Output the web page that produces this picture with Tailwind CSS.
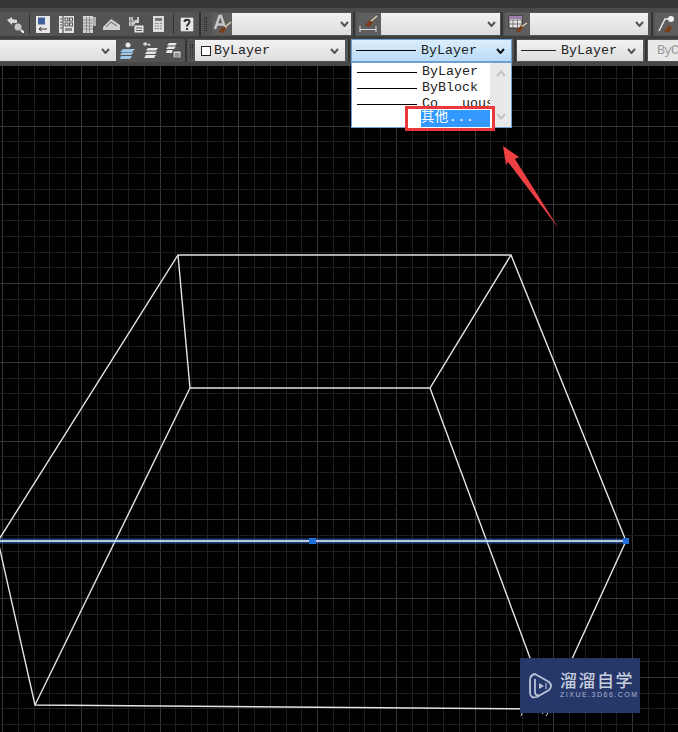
<!DOCTYPE html>
<html lang="en">
  <head>
    <meta charset="UTF-8" />
    <title>CAD toolbar</title>
    <script src="https://cdn.jsdelivr.net/npm/@tailwindcss/browser@4"></script>
  </head>
  <body class="bg-black overflow-hidden font-['Liberation_Mono','Noto_Sans_CJK_SC',monospace] text-[13.33px] text-[#222]">
    <div class="relative w-[678px] h-[732px] flex flex-col overflow-hidden">
      <div class="h-[8px] shrink-0 bg-[#363636]"></div>
      <div class="h-[4px] shrink-0 bg-[#4a4a4a]"></div>

      <!-- Toolbar row 1 -->
      <div class="h-[24px] shrink-0 bg-[#535353] flex items-center overflow-hidden">
        <svg class="ml-[7px] w-[17px] h-[17px] shrink-0" viewBox="0 0 17 17">
          <path d="M0 4 L5 1 L5 3 L10 4 L10 7 L5 7 L5 9 Z" fill="#d8d8d8" />
          <circle cx="11" cy="11" r="3.5" fill="#c8c8c8" />
          <path d="M14 14 L17 17" stroke="#fff" stroke-width="2" />
        </svg>
        <div class="ml-[5px] w-px h-[20px] shrink-0 bg-[#333]"></div>
        <svg class="ml-[6px] w-[14px] h-[17px] shrink-0" viewBox="0 0 14 17">
          <rect width="14" height="17" fill="#e8e8e8" />
          <rect x="2" y="1.5" width="7" height="7" fill="#3f5f9f" />
          <path d="M3 13 H11 M3 13 L5.500 11 M3 13 L5.500 15" stroke="#333" fill="none" />
        </svg>
        <svg class="ml-[9px] w-[15px] h-[17px] shrink-0" viewBox="0 0 15 17">
          <rect width="15" height="17" fill="#e4e4e4" />
          <path d="M4 0 V17" stroke="#333" />
          <path d="M1 3 H3 M1 6 H3 M1 9 H3 M1 12 H3" stroke="#555" />
          <rect x="6" y="2" width="3" height="3" fill="none" stroke="#555" />
          <rect x="10.500" y="2" width="3" height="3" fill="none" stroke="#555" />
          <rect x="6" y="7" width="3" height="3" fill="none" stroke="#555" />
          <rect x="10.500" y="7" width="3" height="3" fill="none" stroke="#555" />
          <rect x="6" y="12" width="7" height="3" fill="#888" />
        </svg>
        <svg class="ml-[9px] w-[13px] h-[17px] shrink-0" viewBox="0 0 13 17">
          <rect width="10" height="17" fill="#d4d4d4" />
          <rect x="10" y="1" width="3" height="9" fill="#b0b0b0" />
          <path d="M3.500 1 V17 M6.500 1 V17 M0 4 H10 M0 7 H10 M0 10 H10 M0 13 H10" stroke="#8a8a8a" />
        </svg>
        <svg class="ml-[7px] w-[17px] h-[15px] shrink-0" viewBox="0 0 17 15">
          <path d="M0 10 L8 2 L17 8 L17 13 L0 13 Z" fill="#d0d0d0" />
          <path d="M3 10 L8 5 L14 9 M8 0 L15 6" stroke="#666" fill="none" />
        </svg>
        <svg class="ml-[8px] w-[16px] h-[17px] shrink-0" viewBox="0 0 16 17">
          <path d="M1 1 H5 V4 H9 V1 H11 V7 H7 V10 H1 Z" fill="#cfcfcf" />
          <path d="M3 1 V10 M1 5 H7" stroke="#777" />
          <rect x="6" y="9" width="10" height="8" fill="#e8e8e8" stroke="#555" />
          <path d="M8 12 H14 M8 14.500 H14" stroke="#555" />
        </svg>
        <svg class="ml-[9px] w-[11px] h-[16px] shrink-0" viewBox="0 0 11 16">
          <rect width="11" height="16" fill="#dcdcdc" />
          <rect x="2" y="2" width="7" height="3" fill="#777" />
          <path d="M2 7.500 H9 M2 10 H9 M2 12.500 H9" stroke="#777" stroke-dasharray="1.500 1" />
        </svg>
        <div class="ml-[9px] w-px h-[20px] shrink-0 bg-[#333]"></div>
        <svg class="ml-[6px] w-[14px] h-[15px] shrink-0" viewBox="0 0 14 15">
          <rect width="14" height="15" fill="#e6e6e6" stroke="#222" />
          <path d="M4.500 5 C4.500 2 9.500 2 9.500 5 C9.500 7 7 7 7 9.500 M7 11 V13" stroke="#333" stroke-width="2" fill="none" />
        </svg>
        <div class="ml-[5px] w-[2px] h-[24px] shrink-0 bg-[#2f2f2f]"></div>
        <div class="ml-[3px] w-[3px] h-[14px] shrink-0 border-x border-dotted border-[#222]"></div>
        <div class="ml-[5px] w-[20px] h-[22px] bg-[#5e5e5e] flex items-center justify-center shrink-0">
          <svg class="w-[19px] h-[20px]" viewBox="0 0 19 20">
            <path d="M2 15 L6.500 2 H8 L12.500 15 M4 10.500 H10.500" stroke="#c8c8c8" stroke-width="2.400" fill="none" />
            <path d="M18 8 L11 14" stroke="#e0d0b0" stroke-width="1.500" />
            <path d="M5 18 L11 12 L13.500 15 L10 19 Z" fill="#7a3d1c" />
          </svg>
        </div>
        <div class="w-[119px] h-[22px] shrink-0 bg-linear-to-b from-[#f2f2f2] to-[#dddddd] flex items-center justify-end pr-[2px]">
          <svg class="w-[9px] h-[6px]" viewBox="0 0 9 6"><path d="M1 1 L4.500 5 L8 1" fill="none" stroke="#555" stroke-width="2" /></svg>
        </div>
        <div class="ml-[2px] w-[2px] h-[24px] shrink-0 bg-[#333]"></div>
        <div class="ml-[2px] w-[24px] h-[22px] bg-[#5e5e5e] flex items-center justify-center shrink-0">
          <svg class="w-[20px] h-[18px]" viewBox="0 0 20 18">
            <path d="M1 11 V17 M1 14.500 H17 M17 11 V17" stroke="#d8d8d8" fill="none" />
            <path d="M18 1 L11 7" stroke="#e0d0b0" stroke-width="1.500" />
            <path d="M6 10 L11 5 L14 8 L10 12 Z" fill="#7a3d1c" />
          </svg>
        </div>
        <div class="w-[119px] h-[22px] shrink-0 bg-linear-to-b from-[#f2f2f2] to-[#dddddd] flex items-center justify-end pr-[4px]">
          <svg class="w-[9px] h-[6px]" viewBox="0 0 9 6"><path d="M1 1 L4.500 5 L8 1" fill="none" stroke="#555" stroke-width="2" /></svg>
        </div>
        <div class="ml-[1px] w-[2px] h-[24px] shrink-0 bg-[#333]"></div>
        <div class="ml-[2px] w-[25px] h-[22px] bg-[#5e5e5e] flex items-center justify-center shrink-0">
          <svg class="w-[20px] h-[18px]" viewBox="0 0 20 18">
            <rect x="1" y="1" width="13" height="12" fill="#e8e8e8" stroke="#333" />
            <path d="M1 5 H14 M5 5 V13 M9.500 5 V13 M1 9 H14" stroke="#777" fill="none" />
            <rect x="1" y="1" width="13" height="3" fill="#a080b0" />
            <path d="M19 8 L13 12" stroke="#e0d0b0" stroke-width="1.500" />
            <path d="M8 17 L13 10 L15 13 L12 17 Z" fill="#7a3d1c" />
          </svg>
        </div>
        <div class="w-[118px] h-[22px] shrink-0 bg-linear-to-b from-[#f2f2f2] to-[#dddddd] flex items-center justify-end pr-[4px]">
          <svg class="w-[9px] h-[6px]" viewBox="0 0 9 6"><path d="M1 1 L4.500 5 L8 1" fill="none" stroke="#555" stroke-width="2" /></svg>
        </div>
        <div class="ml-[3px] w-[2px] h-[24px] shrink-0 bg-[#333]"></div>
        <div class="ml-[2px] w-[23px] h-[22px] bg-[#5e5e5e] flex items-center justify-center shrink-0">
          <svg class="w-[20px] h-[20px]" viewBox="0 0 20 20">
            <path d="M2 17 L8 5 H13" stroke="#e8e8e8" stroke-width="1.500" fill="none" />
            <circle cx="14" cy="5" r="3" fill="#f0f0f0" />
            <path d="M7 17 L12 11 L15 14 L12 19 Z" fill="#7a3d1c" />
          </svg>
        </div>
      </div>

      <div class="h-[3px] shrink-0 bg-[#3e3e3e]"></div>

      <!-- Toolbar row 2 -->
      <div class="h-[23px] shrink-0 bg-[#535353] flex items-center overflow-hidden">
        <div class="w-[116px] h-[21px] shrink-0 bg-linear-to-b from-[#f2f2f2] to-[#dddddd] flex items-center justify-end pr-[6px]">
          <svg class="w-[9px] h-[6px]" viewBox="0 0 9 6"><path d="M1 1 L4.500 5 L8 1" fill="none" stroke="#555" stroke-width="2" /></svg>
        </div>
        <svg class="ml-[4px] w-[15px] h-[17px] shrink-0" viewBox="0 0 15 17">
          <path d="M3 7 H15 L12 10 H0 Z M2 10.500 H14 L11 13 H0 Z M1 14 H12 L10 17 H0 Z" fill="#9fc8e8" />
          <circle cx="8" cy="3" r="2.500" fill="#e8e8e8" />
        </svg>
        <svg class="ml-[8px] w-[15px] h-[17px] shrink-0" viewBox="0 0 15 17">
          <path d="M0 2 L3 0 V4 Z M3 2 H7 V4" fill="#ddd" stroke="#ddd" stroke-width="0.500" />
          <path d="M5 6 H15 L13 8.500 H3 Z M4 9.500 H14 L12 12 H2 Z M3 13 H13 L11 16 H1 Z" fill="#e8e8e8" />
        </svg>
        <svg class="ml-[8px] w-[15px] h-[17px] shrink-0" viewBox="0 0 15 17">
          <path d="M3 1 H11 L9 3.500 H1 Z M2 4.500 H10 L8 7 H0 Z M1 8 H7 L6 11 H0 Z" fill="#e8e8e8" />
          <rect x="7" y="9" width="8" height="7" fill="#ddd" stroke="#444" />
          <path d="M8.500 12 H13.500 M8.500 14 H13.500" stroke="#444" />
        </svg>
        <div class="ml-[4px] w-[2px] h-[23px] shrink-0 bg-[#333]"></div>
        <div class="ml-[3px] w-[3px] h-[14px] shrink-0 border-x border-dotted border-[#222]"></div>
        <div class="ml-[2px] w-[150px] h-[21px] shrink-0 bg-linear-to-b from-[#f2f2f2] to-[#dddddd] flex items-center pl-[6px] pr-[6px]">
          <span class="w-[10px] h-[10px] border border-[#222] bg-white shrink-0"></span>
          <span class="ml-[3px] flex-1">ByLayer</span>
          <svg class="w-[9px] h-[6px]" viewBox="0 0 9 6"><path d="M1 1 L4.500 5 L8 1" fill="none" stroke="#555" stroke-width="2" /></svg>
        </div>
        <div class="ml-[3px] w-[2px] h-[23px] shrink-0 bg-[#333]"></div>
        <div class="w-[161px] h-[23px] ml-[1px] shrink-0 bg-linear-to-b from-[#dcEefc] to-[#b9dbf6] border border-[#6d9fd2] flex items-center pl-[4px] pr-[6px]">
          <span class="w-[60px] h-px bg-black shrink-0"></span>
          <span class="ml-[5px] flex-1">ByLayer</span>
          <svg class="w-[9px] h-[6px]" viewBox="0 0 9 6"><path d="M1 1 L4.500 5 L8 1" fill="none" stroke="#111" stroke-width="2" /></svg>
        </div>
        <div class="ml-[2px] w-[2px] h-[23px] shrink-0 bg-[#333]"></div>
        <div class="ml-[1px] w-[126px] h-[21px] shrink-0 bg-linear-to-b from-[#f2f2f2] to-[#dddddd] flex items-center pl-[4px] pr-[7px]">
          <span class="w-[35px] h-px bg-[#222] shrink-0"></span>
          <span class="ml-[5px] flex-1">ByLayer</span>
          <svg class="w-[9px] h-[6px]" viewBox="0 0 9 6"><path d="M1 1 L4.500 5 L8 1" fill="none" stroke="#555" stroke-width="2" /></svg>
        </div>
        <div class="ml-[2px] w-[2px] h-[23px] shrink-0 bg-[#333]"></div>
        <div class="ml-[1px] w-[30px] h-[21px] shrink-0 bg-[#e8e8e8] text-[#999] pl-[9px] flex items-center tracking-[-1px]">ByC</div>
      </div>

      <div class="h-[4px] shrink-0 bg-[#474747]"></div>

      <!-- Drawing area -->
      <div class="relative flex-1 bg-black">
        <svg id="canvas" class="absolute inset-0 w-[678px] h-[666px]" viewBox="0 66 678 666">
          <g id="grid"></g>
          <g fill="none" stroke="#e4e4e4" stroke-width="1.400">
            <path d="M178 255 H511 L626 541 L549 709 L35 705 L-2 541 Z" />
            <path d="M178 255 L190 388 H430 L511 255" />
            <path d="M190 388 L35 705" />
            <path d="M430 388 L549 709" />
          </g>
          <path d="M0 541 H626" stroke="#3a78d8" stroke-width="5" opacity="0.550" />
          <path d="M0 541 H626" stroke="#f0f4ff" stroke-width="1.300" />
          <rect x="309" y="538" width="7" height="6" fill="#1f6fd8" />
          <rect x="623" y="538" width="6" height="6" fill="#1f6fd8" />
          <path d="M503 146 L519 157 L515 159 L559 229 L508 162 L506 165 Z" fill="#ee3f42" />
          <path d="M521 711 L523 711 L521 716 M541 711 L543 714 M546 711 L549 711 L546 716" stroke="#d8d8d8" fill="none" />
        </svg>
      </div>

      <!-- Open dropdown -->
      <div class="absolute left-[351px] top-[62px] w-[161px] h-[66px] bg-white border border-[#6d9fd2] flex overflow-hidden">
        <div class="flex-1 min-w-0 overflow-hidden flex flex-col pt-[1px]">
          <div class="h-[16px] flex items-center pl-[5px]">
            <span class="w-[60px] h-px bg-black shrink-0"></span>
            <span class="ml-[5px]">ByLayer</span>
          </div>
          <div class="h-[16px] flex items-center pl-[5px]">
            <span class="w-[60px] h-px bg-black shrink-0"></span>
            <span class="ml-[5px]">ByBlock</span>
          </div>
          <div class="h-[16px] flex items-center pl-[5px]">
            <span class="w-[60px] h-px bg-black shrink-0"></span>
            <span class="ml-[5px]">Co</span>
            <span class="ml-[24px] whitespace-nowrap">uous</span>
          </div>
        </div>
        <div class="w-[21px] shrink-0 bg-[#e9e9e9] flex flex-col justify-between items-center py-[7px]">
          <svg class="w-[10px] h-[7px]" viewBox="0 0 10 7"><path d="M1 6 L5 1.500 L9 6" fill="none" stroke="#c4c4c4" stroke-width="2" /></svg>
          <svg class="w-[10px] h-[7px]" viewBox="0 0 10 7"><path d="M1 1 L5 5.500 L9 1" fill="none" stroke="#c4c4c4" stroke-width="2" /></svg>
        </div>
      </div>

      <!-- Highlighted option with red annotation -->
      <div class="absolute left-[405px] top-[106px] w-[90px] h-[25px] border-[3px] border-[#e8383c] bg-white pl-[13px] pr-[2px] py-px">
        <div class="h-[17px] bg-[#3399ff] text-white leading-[16px] tracking-[0.5px] whitespace-nowrap">其他...</div>
      </div>

      <!-- Watermark -->
      <div class="absolute left-[520px] top-[658px] w-[120px] h-[55px] bg-[#26386a] flex items-center pl-[8px] font-['Noto_Sans_CJK_SC',sans-serif]">
        <svg class="w-[25px] h-[28px] shrink-0" viewBox="0 0 25 28" fill="none" stroke="#b9c2d8" stroke-width="1.800">
          <path d="M7 2 L21 10 Q25 14 21 18 L9 25 Q2 27 2 20 V8 Q2 3 7 2 Z" />
          <path d="M7 7 V20 Q7 24 11 23" />
          <path d="M11 11 L16 14 L11 17 Z" fill="#b9c2d8" stroke="none" />
          <path d="M18 11 V17" stroke-width="1.200" />
        </svg>
        <div class="ml-[7px] flex flex-col mt-[-2px]">
          <div class="text-[#c9cfdf] text-[17px] leading-[20px] tracking-[1.500px] font-medium whitespace-nowrap">溜溜自学</div>
          <div class="text-[#aeb7cf] text-[7px] leading-[9px] tracking-[1.500px] whitespace-nowrap font-['Liberation_Sans',sans-serif]">ZIXUE.3D66.COM</div>
        </div>
      </div>
    </div>

    <script>
      // grid lines, every fifth one brighter
      const grid = document.getElementById("grid");
      const step = 15.75;
      function addLine(x1, y1, x2, y2, major) {
        const line = document.createElementNS("http://www.w3.org/2000/svg", "line");
        line.setAttribute("x1", x1);
        line.setAttribute("y1", y1);
        line.setAttribute("x2", x2);
        line.setAttribute("y2", y2);
        line.setAttribute("stroke", major ? "#35353c" : "#1e1e22");
        grid.appendChild(line);
      }
      for (let i = 0; i < 44; i++) {
        const x = Math.floor(2.7 + i * step) + 0.5;
        addLine(x, 66, x, 732, i % 5 === 0);
      }
      for (let i = 0; i < 44; i++) {
        const y = Math.floor(78.9 + i * step) + 0.5;
        addLine(0, y, 678, y, i % 5 === 3);
      }
    </script>
  </body>
</html>
